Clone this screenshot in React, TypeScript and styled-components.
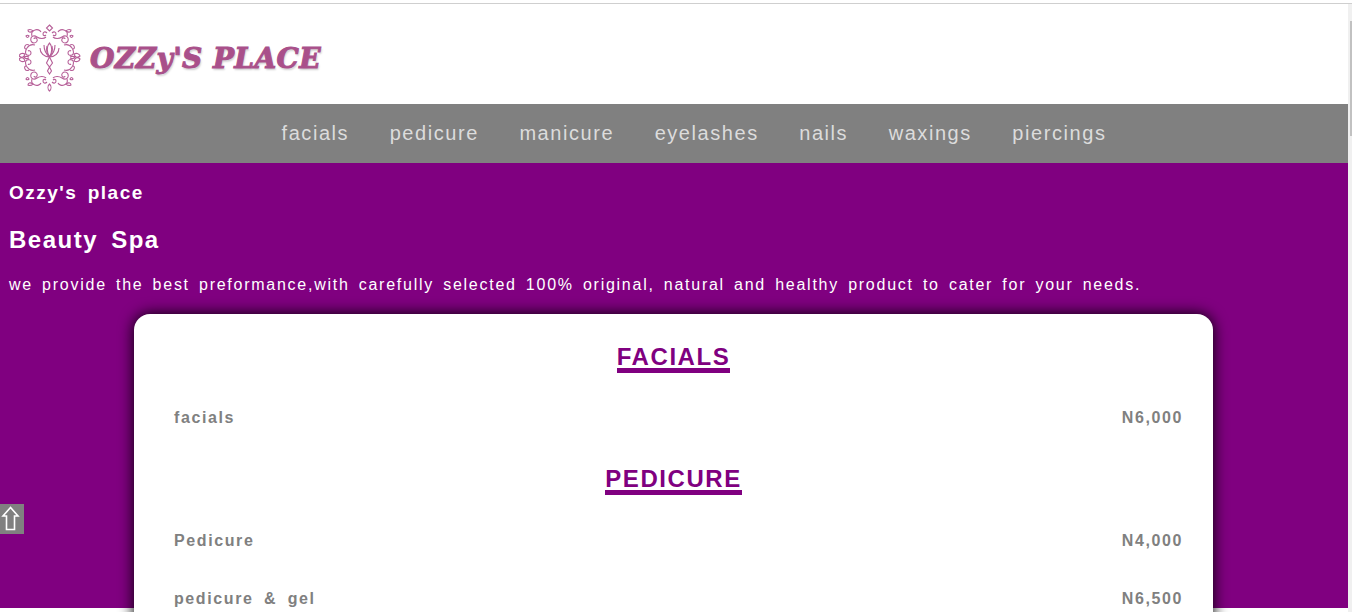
import styled, { createGlobalStyle } from "styled-components"

const GlobalStyle = createGlobalStyle`
    html, body {
        margin: 0;
        height: 612px;
        overflow: hidden;
        background: #fff;
        font-family: "Liberation Sans", Arial, sans-serif;
    }
`

const TopLine = styled.div`
    height: 3px;
    border-bottom: 1px solid #cfcfcf;
`

const Shell = styled.div`
    display: flex;
    height: 608px;
    overflow: hidden;
`

const Page = styled.div`
    flex: 1;
    min-width: 0;
`

const ScrollTrack = styled.div`
    width: 4px;
    background: #f0f0f0;
    display: flex;
    justify-content: flex-end;
    padding-top: 17px;
    box-sizing: border-box;
`

const ScrollThumb = styled.div`
    width: 2px;
    height: 115px;
    background: #c1c1c1;
`

const Header = styled.header`
    height: 100px;
    box-sizing: border-box;
    display: flex;
    align-items: center;
    padding: 7px 0 0 19px;
    gap: 9px;
`

const LogoText = styled.div`
    font-family: "DejaVu Serif", serif;
    font-size: 28px;
    line-height: 34px;
    padding-top: 2px;
    font-weight: 700;
    font-style: italic;
    letter-spacing: 0.4px;
    color: #a9508a;
    -webkit-text-stroke: 1px #a9508a;
    text-shadow: 1px 2px 2px #ccc;
    white-space: nowrap;
`

const Nav = styled.nav`
    height: 59px;
    background: #808080;
    display: flex;
    justify-content: center;
    align-items: center;
    gap: 40.5px;
    padding-left: 40px;
`

const NavLink = styled.a`
    font-size: 20px;
    letter-spacing: 1.56px;
    color: #dcdcdc;
`

const Main = styled.main`
    height: 445px;
    background: #800080;
    color: #fff;
    padding: 19px 9px 0;
    box-sizing: border-box;
`

const Brand = styled.h3`
    margin: 0;
    font-size: 19px;
    line-height: 21px;
    letter-spacing: 1.5px;
    word-spacing: 3.5px;
`

const Title = styled.h2`
    margin: 23px 0 0;
    font-size: 24px;
    line-height: 27px;
    letter-spacing: 1.5px;
    word-spacing: 5px;
`

const Intro = styled.p`
    margin: 23px 0 0;
    font-size: 16px;
    line-height: 18px;
    letter-spacing: 1.74px;
    word-spacing: 3px;
    white-space: nowrap;
`

const Card = styled.section`
    width: 1079px;
    height: 400px;
    margin: 20px 0 0 125px;
    padding: 30px 40px 0;
    box-sizing: border-box;
    background: #fff;
    border-radius: 16px;
    box-shadow: 0 0 15px #000;
`

const CategoryTitle = styled.h2<{ $gap: number }>`
    width: max-content;
    margin: ${(p) => p.$gap}px auto 0;
    padding-top: 2px;
    font-size: 24px;
    line-height: 22px;
    letter-spacing: 1.55px;
    color: #800080;
    border-bottom: 5px solid #800080;
`

const PriceRow = styled.div<{ $top: number }>`
    display: flex;
    justify-content: space-between;
    margin: ${(p) => p.$top}px -10px 0 0;
    font-size: 16px;
    line-height: 18px;
    font-weight: 700;
    letter-spacing: 1.6px;
    word-spacing: 4.5px;
    color: #808080;
`

const BackToTop = styled.a`
    position: fixed;
    left: 0;
    top: 504px;
    width: 24px;
    height: 30px;
    background: #808080;
    display: block;
`

const navItems = ["facials", "pedicure", "manicure", "eyelashes", "nails", "waxings", "piercings"]

// one quarter of the ornament, mirrored to the other corners
const Quarter = () => (
    <g>
        <path d="M52 33c2-2 4-1 4 1s-2 2-3 1" />
        <path d="M53 37c2 2 6 2 9 0 3-2 5-1 6 1 1 3-1 5-3 5s-4-2-3-4 3-1 3 0" />
        <path d="M58 32c1-2 4-3 6-2 3 1 4 3 3 6" />
        <path d="M66 31c1-1 3-2 5-1 0 2-2 3-5 1zM70 36c1-1 2-1 3 0-1 2-2 2-3 0z" />
        <path d="M64 45c3-1 6 0 8 3 2 3 2 6 0 7-2 1-4 0-4-2s2-3 3-2" />
        <path d="M70 45c2-1 3-1 4 1s0 3-1 3" />
        <path d="M74 54c2-1 5-1 6 2-2 2-5 2-6-2zM70 57c2-1 4-1 5 1" />
    </g>
)

const Logo = () => (
    <svg width="62" height="68" viewBox="19 24 62 68" fill="none" stroke="#b65f98" strokeWidth="1.1">
        <Quarter />
        <g transform="matrix(-1 0 0 1 99 0)"><Quarter /></g>
        <g transform="matrix(1 0 0 -1 0 115)"><Quarter /></g>
        <g transform="matrix(-1 0 0 -1 99 115)"><Quarter /></g>
        <path d="M49.500 25l3 3-3 3-3-3z" />
        <path d="M49.500 84c2 2 2 5 0 7-2-2-2-5 0-7z" />
        <path d="M49.500 43c3 3 3 9 0 14-3-5-3-11 0-14z" />
        <path d="M44 45c0 5 2 9 5.500 12M55 45c0 5-2 9-5.500 12" />
        <path d="M40 48c0 5 4 9 9.500 9s9.500-4 9.500-9" />
        <path d="M47 46c-1 4 0 8 2.500 11M52 46c1 4 0 8-2.500 11" />
        <path d="M49.500 57l-3 6 3 4 3-4zM49.500 67l-2 4 2 3 2-3z" />
    </svg>
)

const UpArrow = () => (
    <svg width="24" height="30" viewBox="0 0 24 30" fill="none" stroke="#fff" strokeWidth="1.6">
        <path d="M10.500 3.500L3 12h3.500v13.500h8V12H18z" />
    </svg>
)

const App = () => {
    return (
        <>
            <GlobalStyle />
            <TopLine />
            <Shell>
                <Page>
                    <Header>
                        <Logo />
                        <LogoText>OZZy'S PLACE</LogoText>
                    </Header>
                    <Nav>
                        {navItems.map((item) => (
                            <NavLink key={item}>{item}</NavLink>
                        ))}
                    </Nav>
                    <Main>
                        <Brand>Ozzy's place</Brand>
                        <Title>Beauty Spa</Title>
                        <Intro>we provide the best preformance,with carefully selected 100% original, natural and healthy product to cater for your needs.</Intro>
                        <Card>
                            <CategoryTitle $gap={0}>FACIALS</CategoryTitle>
                            <PriceRow $top={36}>
                                <span>facials</span>
                                <span>N6,000</span>
                            </PriceRow>
                            <CategoryTitle $gap={39}>PEDICURE</CategoryTitle>
                            <PriceRow $top={37}>
                                <span>Pedicure</span>
                                <span>N4,000</span>
                            </PriceRow>
                            <PriceRow $top={40}>
                                <span>pedicure &amp; gel</span>
                                <span>N6,500</span>
                            </PriceRow>
                        </Card>
                    </Main>
                </Page>
                <ScrollTrack>
                    <ScrollThumb />
                </ScrollTrack>
            </Shell>
            <BackToTop>
                <UpArrow />
            </BackToTop>
        </>
    )
}

export default App
